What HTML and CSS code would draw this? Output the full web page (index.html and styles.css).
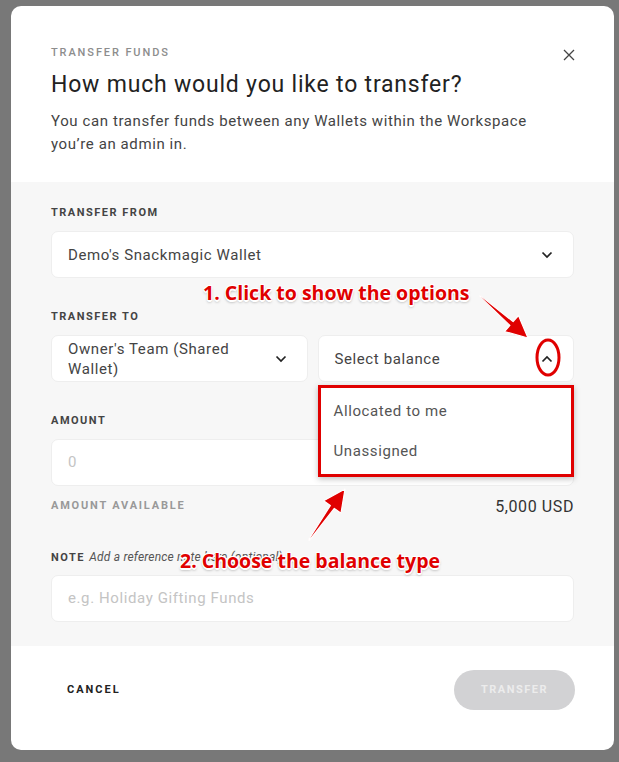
FILE: index.html
```html
<!DOCTYPE html>
<html lang="en">
<head>
    <meta charset="UTF-8">
    <meta name="viewport" content="width=device-width, initial-scale=1.0">
    <title>Transfer Funds</title>
    <link rel="stylesheet" href="styles.css">
</head>
<body>
    <div class="modal">
        <div class="modal_head">
            <div class="head_text">
                <p class="eyebrow">TRANSFER FUNDS</p>
                <h1 class="title">How much would you like to transfer?</h1>
                <p class="desc">You can transfer funds between any Wallets within the Workspace you’re an admin in.</p>
            </div>
            <div class="close">
                <svg width="12" height="12" viewBox="0 0 12 12"><path d="M1 1L11 11M11 1L1 11" stroke="#444" stroke-width="1.3" fill="none"/></svg>
            </div>
        </div>

        <div class="modal_body">
            <div class="label">TRANSFER FROM</div>
            <div class="select">
                <span>Demo's Snackmagic Wallet</span>
                <svg class="chev" width="12" height="8" viewBox="0 0 12 8"><path d="M1.5 1.5L6 6L10.5 1.5" stroke="#222" stroke-width="1.7" fill="none"/></svg>
            </div>

            <div class="label gap">TRANSFER TO</div>
            <div class="row">
                <div class="select">
                    <span class="wrap">Owner's Team (Shared Wallet)</span>
                    <svg class="chev" width="12" height="8" viewBox="0 0 12 8"><path d="M1.5 1.5L6 6L10.5 1.5" stroke="#222" stroke-width="1.7" fill="none"/></svg>
                </div>
                <div class="select open">
                    <span>Select balance</span>
                    <svg class="chev" width="12" height="8" viewBox="0 0 12 8"><path d="M1.5 6.5L6 2L10.5 6.5" stroke="#222" stroke-width="1.7" fill="none"/></svg>
                    <ul class="menu">
                        <li>Allocated to me</li>
                        <li>Unassigned</li>
                    </ul>
                </div>
            </div>

            <div class="label gap">AMOUNT</div>
            <div class="input placeholder">0</div>
            <div class="available">
                <span class="label muted">AMOUNT AVAILABLE</span>
                <span class="value">5,000 USD</span>
            </div>

            <div class="label gap_note">NOTE <em>Add a reference note here (optional)</em></div>
            <div class="input placeholder">e.g. Holiday Gifting Funds</div>
        </div>

        <div class="modal_foot">
            <div class="cancel">CANCEL</div>
            <div class="btn">TRANSFER</div>
        </div>
    </div>

    <!-- annotations drawn over the screenshot -->
    <div class="notes">
        <svg class="marks" width="619" height="762" viewBox="0 0 619 762">
            <g fill="#e00000" stroke="#fff" stroke-width="1.2" stroke-linejoin="round">
                <polygon points="480.3,295.6 513.1,321.6 518.5,315.5 528,338 504.5,331.5 509.9,325.4 479.7,296.4"/>
                <polygon points="309.4,540.3 334.3,508.4 341,513.2 345,489 323.6,500.8 330.3,505.6 308.6,539.7"/>
            </g>
            <ellipse cx="548" cy="357.5" rx="11" ry="17.5" fill="none" stroke="#e00000" stroke-width="3"/>
        </svg>
        <div class="note_text n1">1. Click to show the options</div>
        <div class="note_text n2">2. Choose the balance type</div>
    </div>
</body>
</html>
```

FILE: styles.css
```css
body,p,h1,ul{
    margin: 0;
    padding: 0;
}
body{
    background-color: #787878;
    padding: 6px 5px 12px 11px;
    font-family: Roboto, "Liberation Sans", sans-serif;
    color: #333;
}
.modal{
    width: 603px;
    height: 744px;
    background-color: #fff;
    border-radius: 10px;
    display: flex;
    flex-direction: column;
}
.modal_head{
    display: flex;
    justify-content: space-between;
    padding: 40px 40px 0;
    height: 136px;
}
.eyebrow{
    font-size: 11px;
    line-height: 14px;
    font-weight: 500;
    letter-spacing: 1.9px;
    color: #8d8d8d;
}
.title{
    margin-top: 10px;
    font-size: 23px;
    line-height: 30px;
    font-weight: 400;
    letter-spacing: 0.8px;
    color: #222;
}
.desc{
    margin-top: 10px;
    font-size: 15px;
    line-height: 23px;
    letter-spacing: 0.6px;
    color: #444;
}
.close{
    width: 12px;
    height: 12px;
    margin-right: -1px;
}
.modal_body{
    background-color: #f7f7f7;
    height: 464px;
    padding: 24px 40px 0;
    box-sizing: border-box;
}
.label{
    font-size: 11px;
    line-height: 14px;
    font-weight: 700;
    letter-spacing: 1.5px;
    color: #444;
    margin-bottom: 11px;
}
.label em{
    font-size: 12px;
    font-weight: 400;
    letter-spacing: 0.2px;
    color: #555;
}
.label.gap{
    margin-top: 32px;
}
.label.gap_note{
    margin-top: 36px;
    margin-bottom: 10px;
}
.label.muted{
    color: #999;
    margin: 0;
    letter-spacing: 1.8px;
}
.row{
    display: flex;
    gap: 10px;
}
.row .select{
    flex: 1;
}
.select{
    position: relative;
    height: 47px;
    box-sizing: border-box;
    background-color: #fff;
    border: 1px solid #eeeeee;
    border-radius: 7px;
    display: flex;
    align-items: center;
    justify-content: space-between;
    padding: 0 20px 0 16px;
    font-size: 15px;
    line-height: 20px;
    letter-spacing: 0.6px;
    color: #444;
}
.select .wrap{
    max-width: 180px;
}
.chev{
    flex: none;
}
.menu{
    list-style: none;
    position: absolute;
    left: -1px;
    right: -1px;
    top: 49px;
    background-color: #fff;
    border: 3px solid #e00000;
    padding: 3px 0;
    box-shadow: 0 2px 6px rgba(0,0,0,0.25);
    z-index: 2;
}
.menu li{
    height: 40px;
    line-height: 40px;
    padding-left: 13px;
    font-size: 15px;
    color: #555;
}
.input{
    height: 47px;
    box-sizing: border-box;
    background-color: #fff;
    border: 1px solid #eeeeee;
    border-radius: 7px;
    padding: 0 16px;
    font-size: 15px;
    line-height: 45px;
    letter-spacing: 0.6px;
    color: #444;
}
.input.placeholder{
    color: #c4c4c4;
}
.available{
    display: flex;
    justify-content: space-between;
    align-items: center;
    margin-top: 12px;
    height: 16px;
}
.available .value{
    font-size: 16px;
    letter-spacing: 0.6px;
    color: #333;
}
.modal_foot{
    flex: 1;
    display: flex;
    justify-content: space-between;
    align-items: flex-start;
    padding: 24px 39px 0 56px;
}
.cancel{
    font-size: 11px;
    font-weight: 700;
    letter-spacing: 2px;
    color: #222;
    line-height: 40px;
}
.btn{
    width: 121px;
    height: 40px;
    border-radius: 20px;
    background-color: #d2d2d4;
    color: #ececec;
    font-size: 11px;
    font-weight: 700;
    letter-spacing: 1.5px;
    line-height: 40px;
    text-align: center;
}
.notes{
    position: absolute;
    left: 0;
    top: 0;
    width: 619px;
    height: 762px;
    pointer-events: none;
    z-index: 5;
}
.marks{
    position: absolute;
    left: 0;
    top: 0;
}
.note_text{
    position: absolute;
    font-family: "Open Sans", "Noto Sans", sans-serif;
    font-weight: 700;
    font-size: 19.5px;
    line-height: 22px;
    color: #e00000;
    white-space: nowrap;
    text-shadow: -1px -1px 0 #fff, 1px -1px 0 #fff, -1px 1px 0 #fff, 1px 1px 0 #fff, 0 -1.5px 0 #fff, 0 1.5px 0 #fff, 0 2px 3px rgba(0,0,0,0.4);
}
.n1{
    left: 203px;
    top: 282px;
}
.n2{
    left: 180px;
    top: 550px;
}
```
